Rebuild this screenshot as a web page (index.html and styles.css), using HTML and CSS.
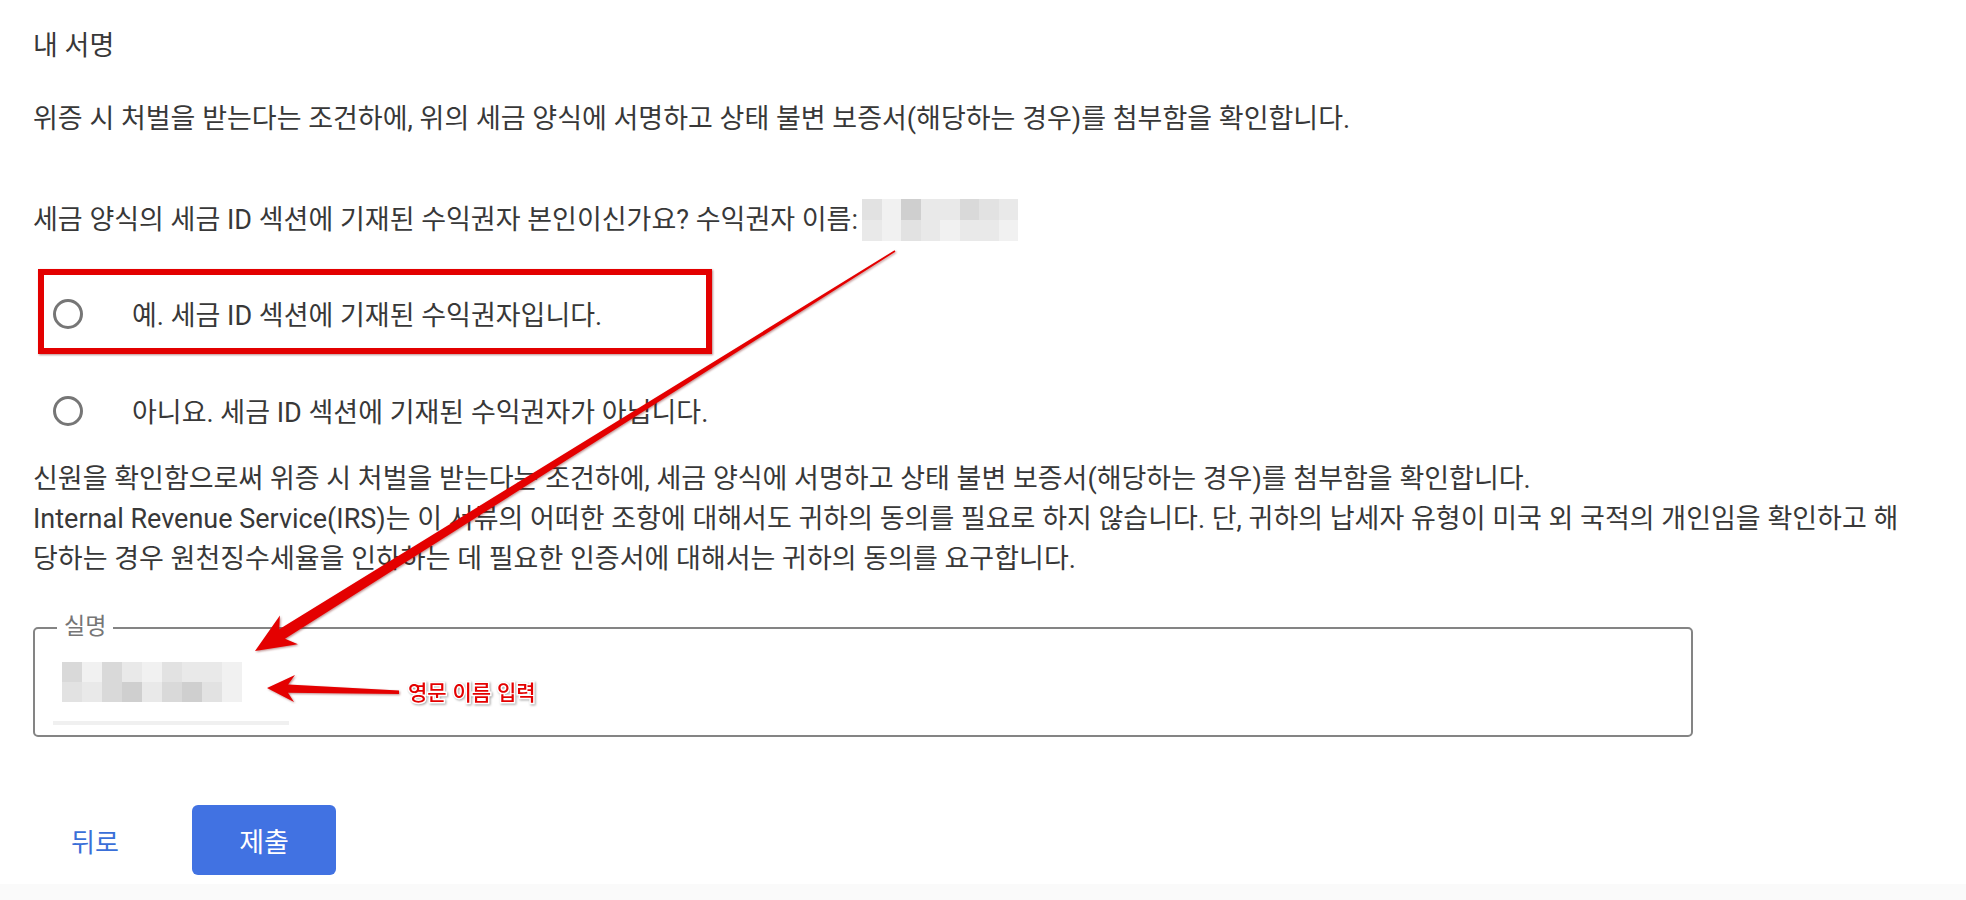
FILE: index.html
```html
<!DOCTYPE html>
<html lang="ko">
<head>
    <meta charset="utf-8">
    <title>내 서명</title>
    <link rel="stylesheet" href="styles.css">
</head>
<body>
    <div class="page">
        <h1 class="title">내 서명</h1>
        <p class="intro">위증 시 처벌을 받는다는 조건하에, 위의 세금 양식에 서명하고 상태 불변 보증서(해당하는 경우)를 첨부함을 확인합니다.</p>
        <p class="question">세금 양식의 세금 ID 섹션에 기재된 수익권자 본인이신가요? 수익권자 이름:<span class="blur blur-name">
            <i class="s3"></i><i class="s5"></i><i class="s1"></i><i class="s4"></i><i class="s4"></i><i class="s2"></i><i class="s3"></i><i class="s4"></i>
            <i class="s4"></i><i class="s5"></i><i class="s3"></i><i class="s4"></i><i class="s5"></i><i class="s4"></i><i class="s4"></i><i class="s5"></i>
        </span></p>

        <div class="radio-group">
            <label class="radio-row">
                <span class="radio"></span>
                <span class="radio-text">예. 세금 ID 섹션에 기재된 수익권자입니다.</span>
            </label>
            <label class="radio-row">
                <span class="radio"></span>
                <span class="radio-text">아니요. 세금 ID 섹션에 기재된 수익권자가 아닙니다.</span>
            </label>
            <div class="highlight-box"></div>
        </div>

        <div class="notice">
            <p>신원을 확인함으로써 위증 시 처벌을 받는다는 조건하에, 세금 양식에 서명하고 상태 불변 보증서(해당하는 경우)를 첨부함을 확인합니다.</p>
            <p>Internal Revenue Service(IRS)는 이 서류의 어떠한 조항에 대해서도 귀하의 동의를 필요로 하지 않습니다. 단, 귀하의 납세자 유형이 미국 외 국적의 개인임을 확인하고 해당하는 경우 원천징수세율을 인하하는 데 필요한 인증서에 대해서는 귀하의 동의를 요구합니다.</p>
        </div>

        <div class="text-field">
            <span class="field-label">실명</span>
            <div class="blur blur-input">
                <i class="s2"></i><i class="s5"></i><i class="s2"></i><i class="s4"></i><i class="s5"></i><i class="s3"></i><i class="s4"></i><i class="s4"></i><i class="s5"></i>
                <i class="s3"></i><i class="s4"></i><i class="s2"></i><i class="s1"></i><i class="s4"></i><i class="s2"></i><i class="s1"></i><i class="s3"></i><i class="s5"></i>
            </div>
            <div class="field-underline"></div>
        </div>

        <div class="actions">
            <button class="btn-text" type="button">뒤로</button>
            <button class="btn-primary" type="submit">제출</button>
        </div>
    </div>
    <div class="footer-band"></div>

    <!-- annotation layer drawn over the screenshot -->
    <svg class="annotations" width="1966" height="900" viewBox="0 0 1966 900">
        <defs>
            <filter id="shade" x="-5%" y="-5%" width="110%" height="110%">
                <feDropShadow dx="1" dy="1" stdDeviation="0.8" flood-color="#600" flood-opacity="0.45"/>
            </filter>
        </defs>
        <polygon class="arrow" filter="url(#shade)"
            points="255,651 297.9,644.2 285,638.7 895.4,251.7 894.6,250.3 279.2,629.3 279.9,615.4"/>
        <polygon class="arrow" filter="url(#shade)"
            points="267,688 294,702 288,692.8 399,694 399,690.4 288.2,684.6 295,675"/>
        <text class="note" x="408" y="700">영문 이름 입력</text>
    </svg>
</body>
</html>
```

FILE: styles.css
```css
body {
    margin: 0;
    font-family: Roboto, "Noto Sans CJK KR", sans-serif;
    color: #383838;
    background-color: #fff;
    width: 1966px;
    height: 900px;
    overflow: hidden;
    position: relative;
}
.page {
    position: relative;
    padding: 26px 0 0 33px;
}
.title {
    margin: 0;
    font-size: 27px;
    font-weight: 400;
    line-height: 40px;
}
.intro, .question {
    margin: 0;
    font-size: 27px;
    line-height: 40px;
}
.intro {
    margin-top: 33px;
}
.question {
    margin-top: 60px;
    display: flex;
    align-items: center;
}
.blur {
    display: grid;
    gap: 0;
}
.blur i {
    display: block;
}
.blur-name {
    margin-left: 4px;
    grid-template-columns: repeat(8, 19.5px);
    grid-auto-rows: 21px;
}
.blur-input {
    position: absolute;
    left: 27px;
    top: 33px;
    grid-template-columns: repeat(9, 20px);
    grid-auto-rows: 20px;
}
.s1 { background-color: #cfcfcf; }
.s2 { background-color: #d9d9d9; }
.s3 { background-color: #e2e2e2; }
.s4 { background-color: #e9e9e9; }
.s5 { background-color: #f1f1f1; }

.radio-group {
    position: relative;
    margin-top: 24px;
}
.radio-row {
    display: flex;
    align-items: center;
    height: 97px;
    padding-left: 20px;
    font-size: 27px;
}
.radio {
    width: 24px;
    height: 24px;
    border: 3px solid #767676;
    border-radius: 50%;
    margin-right: 49px;
    flex-shrink: 0;
}
.highlight-box {
    position: absolute;
    left: 5px;
    top: 4px;
    width: 662px;
    height: 73px;
    border: 6px solid #e30000;
    box-shadow: 1px 1px 2px rgba(90, 0, 0, 0.45);
}

.notice {
    width: 1885px;
    font-size: 27px;
    line-height: 40px;
}
.notice p {
    margin: 0;
}

.text-field {
    position: relative;
    margin-top: 48px;
    width: 1656px;
    height: 106px;
    border: 2px solid #848484;
    border-radius: 5px;
}
.field-label {
    position: absolute;
    left: 22px;
    top: -16px;
    padding: 0 7px;
    background-color: #fff;
    color: #767676;
    font-size: 23px;
    line-height: 28px;
}
.field-underline {
    position: absolute;
    left: 18px;
    top: 92px;
    width: 236px;
    height: 4px;
    background-color: #f0f0f0;
}

.actions {
    display: flex;
    align-items: center;
    margin-top: 68px;
}
.btn-text {
    background: none;
    border: none;
    padding: 0;
    margin-left: 36px;
    width: 52px;
    font-family: inherit;
    font-size: 26px;
    color: #3a6fd8;
    cursor: pointer;
}
.btn-primary {
    margin-left: 71px;
    width: 144px;
    height: 70px;
    border: none;
    border-radius: 6px;
    background-color: #4172e2;
    color: #fff;
    font-family: inherit;
    font-size: 27px;
    cursor: pointer;
}
.footer-band {
    position: absolute;
    left: 0;
    right: 0;
    bottom: 0;
    height: 16px;
    background-color: #fafafa;
}

.annotations {
    position: absolute;
    left: 0;
    top: 0;
    pointer-events: none;
}
.arrow {
    fill: #e40000;
}
.note {
    font-family: "Noto Sans CJK KR", sans-serif;
    font-size: 21px;
    font-weight: 500;
    fill: #e40000;
    stroke: #fff;
    stroke-width: 3px;
    paint-order: stroke;
    filter: drop-shadow(1px 1px 1px rgba(0, 0, 0, 0.35));
}
```
